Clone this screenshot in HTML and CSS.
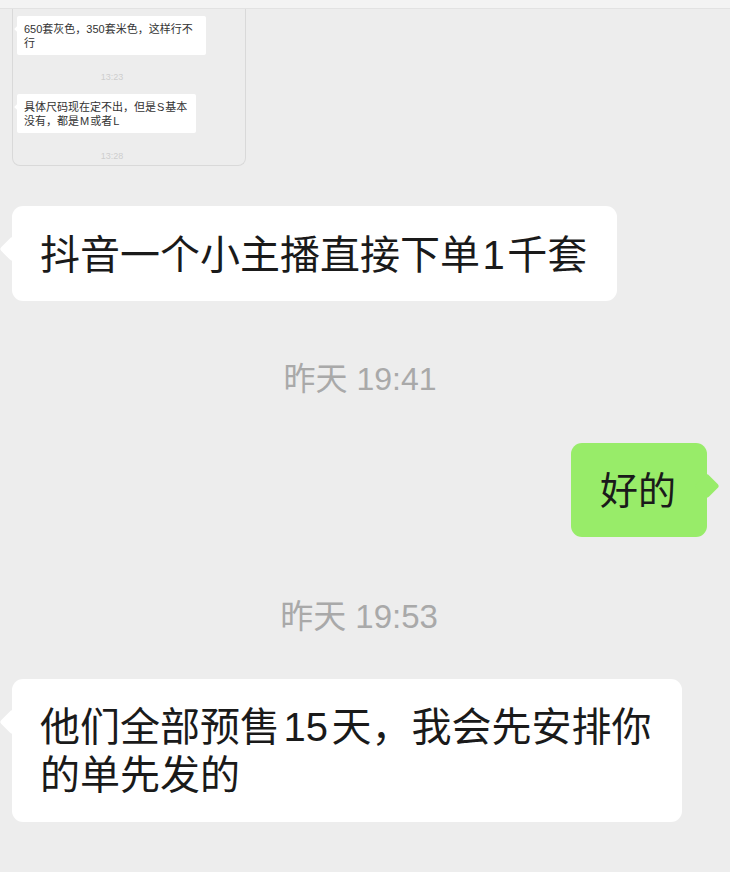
FILE: index.html
```html
<!DOCTYPE html>
<html lang="zh-CN">
<head>
  <meta charset="UTF-8" />
  <meta name="viewport" content="width=device-width, initial-scale=1.0" />
  <title>聊天记录</title>
  <link rel="stylesheet" href="styles.css">
</head>
<body>
  <div class="top-bar"></div>

  <!-- 转发的聊天截图 -->
  <div class="quote-card">
    <div class="quote-msg quote-msg-first">650套灰色，350套米色，这样行不行</div>
    <div class="quote-time">13:23</div>
    <div class="quote-msg quote-msg-second">具体尺码现在定不出，但是<span class="quote-num">S</span>基本没有，都是<span class="quote-num">M</span>或者<span class="quote-num">L</span></div>
    <div class="quote-time quote-time-last">13:28</div>
  </div>

  <div class="bubble bubble-left bubble-one">抖音一个小主播直接下单<span class="num">1</span>千套</div>

  <div class="time time-one">昨天 19:41</div>

  <div class="row-right">
    <div class="bubble bubble-right">好的</div>
  </div>

  <div class="time time-two">昨天 19:53</div>

  <div class="bubble bubble-left bubble-three">他们全部预售<span class="num">15</span>天，我会先安排你的单先发的</div>
</body>
</html>
```

FILE: styles.css
```css
html, body {
  margin: 0;
  padding: 0;
}
body {
  width: 730px;
  height: 872px;
  overflow: hidden;
  background: #ededed;
  color: #1a1a1a;
  font-family: "Liberation Sans", "Noto Sans CJK SC", sans-serif;
}
.top-bar {
  height: 8px;
  background: #f3f3f3;
  border-bottom: 1px solid #e2e2e2;
}

/* 转发的聊天截图 */
.quote-card {
  box-sizing: border-box;
  width: 234px;
  height: 157px;
  margin-left: 12px;
  padding-top: 7px;
  border: 1px solid #d9d9d9;
  border-top: none;
  border-radius: 0 0 8px 8px;
}
.quote-msg {
  position: relative;
  box-sizing: border-box;
  margin-left: 4px;
  padding: 6px 7px 5px;
  background: #fff;
  border-radius: 2px;
  color: #333;
  font-size: 11px;
  line-height: 14px;
}
.quote-msg::before {
  content: "";
  position: absolute;
  top: 11px;
  left: -2px;
  width: 4px;
  height: 4px;
  background: #fff;
  transform: rotate(45deg);
}
.quote-msg-first {
  width: 189px;
}
.quote-msg-second {
  width: 179px;
}
.quote-num {
  padding: 0 1px;
}
.quote-time {
  height: 39px;
  padding-top: 15px;
  padding-right: 34px;
  box-sizing: border-box;
  text-align: center;
  color: #cdcdcd;
  font-size: 9px;
  line-height: 14px;
}
.quote-time-last {
  height: 30px;
  padding-top: 16px;
}

/* 主消息气泡 */
.bubble {
  position: relative;
  box-sizing: border-box;
  background: #fff;
  border-radius: 11px;
  font-size: 40px;
  line-height: 48px;
  padding: 25px 28px;
}
.bubble::before {
  content: "";
  position: absolute;
  top: 34px;
  width: 18px;
  height: 18px;
  background: inherit;
  border-radius: 3px;
  transform: rotate(45deg);
}
.bubble-left {
  margin-left: 12px;
}
.bubble-left::before {
  left: -9px;
}
.bubble-one {
  width: 605px;
  height: 95px;
  margin-top: 40px;
}
.bubble-three {
  width: 670px;
  height: 143px;
  margin-top: 43px;
  padding-top: 24px;
}
.num {
  padding: 0 2.5px;
}
.bubble-three .num {
  padding: 0 3.5px;
}
.row-right {
  display: flex;
  justify-content: flex-end;
  padding-right: 23px;
}
.bubble-right {
  width: 136px;
  height: 94px;
  background: #98ec69;
  padding: 24px 29px;
  font-size: 38px;
  white-space: nowrap;
}
.bubble-right::before {
  right: -9px;
}
.time {
  padding-right: 10px;
  text-align: center;
  color: #a9a9a9;
  font-size: 32px;
  line-height: 40px;
}
.time-one {
  margin-top: 58px;
  margin-bottom: 44px;
}
.time-two {
  margin-top: 59px;
  padding-right: 12px;
  padding-top: 1px;
  margin-bottom: -1px;
  font-size: 33px;
}
```
